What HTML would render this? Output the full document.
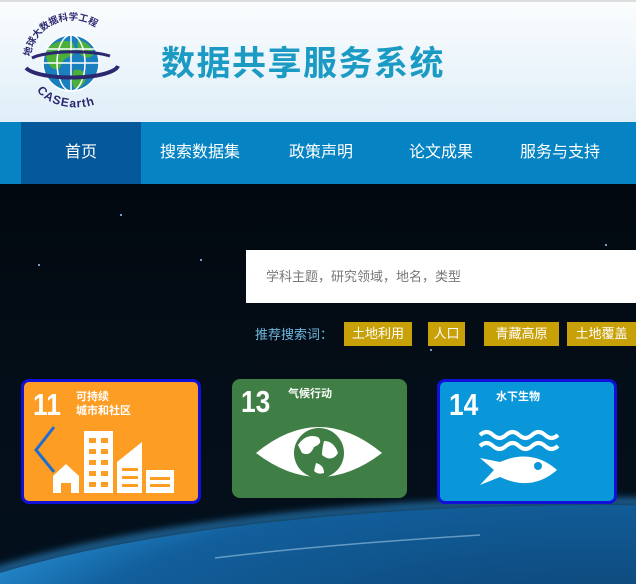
<!DOCTYPE html>
<html><head><meta charset="utf-8"><style>
*{margin:0;padding:0;box-sizing:border-box}
html,body{width:636px;height:584px;overflow:hidden}
body{font-family:"Liberation Sans","Noto Sans CJK SC",sans-serif;background:#000;position:relative}
.hdr{position:absolute;left:0;top:0;width:636px;height:122px;background:linear-gradient(#fbfdfe,#dfeef8);border-top:2px solid #ddd}
.title{position:absolute;left:161px;top:36px;font-size:34px;font-weight:bold;color:#1b9bc4;letter-spacing:1.5px}
.nav{position:absolute;left:0;top:122px;width:636px;height:62px;background:#0583c2}
.nav div{position:absolute;top:0;height:62px;line-height:62px;color:#fff;font-size:16px;text-align:center;width:120px}
.nav .act{background:#05599a}
.sky{position:absolute;left:0;top:184px;width:636px;height:400px;background:linear-gradient(#02080f,#040e18 50%,#03101c)}
.search{position:absolute;left:246px;top:250px;width:390px;height:53px;background:#fff;color:#777;font-size:13px;line-height:53px;padding-left:20px}
.lbl{position:absolute;left:255px;top:324px;color:#6fb8e0;font-size:13px}
.tag{position:absolute;top:322px;height:24px;line-height:24px;background:#c8a008;color:#fff;font-size:13px;text-align:center}
.card{position:absolute;top:379px;color:#fff;overflow:hidden}
.num{position:absolute;font-size:31px;font-weight:bold;font-family:"Liberation Sans Narrow","Liberation Sans",sans-serif;transform:scaleX(.85);transform-origin:left}
.cap{position:absolute;font-size:11px;font-weight:bold;line-height:14px}
.star{position:absolute;width:2px;height:2px;background:#9cf;border-radius:50%}
</style></head><body>
<div class="hdr"></div>
<svg style="position:absolute;left:0;top:0" width="140" height="122" viewBox="0 0 140 122">
<defs>
<path id="ta" d="M30 62 A42 42 0 0 1 114 62"/>
<path id="tb" d="M34 82 A40 26 0 0 0 118 78"/>
<clipPath id="gc"><circle cx="71" cy="63" r="28"/></clipPath>
</defs>
<circle cx="71" cy="63" r="28" fill="#1a7fbf"/>
<g clip-path="url(#gc)" fill="#4caf3a">
<path d="M48 48 q10-10 24-6 q6 8 0 14 q-10 2-12 12 q-8 4-12-6 q-4-6 0-14z"/>
<path d="M78 40 q12 2 16 14 q-4 6-12 2 q-6-6-4-16z"/>
<path d="M74 70 q10-2 12 8 q-2 10-12 10 q-4-8 0-18z"/>
</g>
<g stroke="#fff" stroke-width="1.5" fill="none">
<circle cx="71" cy="63" r="28"/><ellipse cx="71" cy="63" rx="14" ry="28"/><line x1="71" y1="35" x2="71" y2="91"/>
<line x1="43" y1="63" x2="99" y2="63"/><line x1="47" y1="49" x2="95" y2="49"/><line x1="47" y1="77" x2="95" y2="77"/></g>
<path d="M26 68 A47 13 0 0 0 118 66" fill="none" stroke="#2b2870" stroke-width="4"/>
<path d="M32 58 A45 10 0 0 1 110 56" fill="none" stroke="#2b2870" stroke-width="3"/>
<text font-size="9.5" font-weight="bold" fill="#2b2870" font-family="Noto Sans CJK SC,sans-serif"><textPath href="#ta" startOffset="4%">地球大数据科学工程</textPath></text>
<text font-size="12" font-weight="bold" fill="#2b2870" letter-spacing="1"><textPath href="#tb" startOffset="8%">CASEarth</textPath></text>
</svg>
<div class="title">数据共享服务系统</div>
<div class="nav">
<div class="act" style="left:21px">首页</div>
<div style="left:140px">搜索数据集</div>
<div style="left:261px">政策声明</div>
<div style="left:381px">论文成果</div>
<div style="left:500px">服务与支持</div>
</div>
<div class="sky">
<div class="star" style="left:38px;top:80px"></div><div class="star" style="left:200px;top:75px"></div><div class="star" style="left:605px;top:60px"></div><div class="star" style="left:430px;top:165px"></div><div class="star" style="left:560px;top:110px"></div><div class="star" style="left:120px;top:30px"></div>
</div>
<svg style="position:absolute;left:0;top:0" width="636" height="584">
<defs>
<radialGradient id="eg" cx="600" cy="675" r="750" gradientUnits="userSpaceOnUse" gradientTransform="translate(0 450) scale(1 .3333)">
<stop offset="0" stop-color="#0a3a66"/><stop offset=".75" stop-color="#125f9c"/><stop offset=".95" stop-color="#2790d4"/><stop offset="1" stop-color="#6cc8f6"/>
</radialGradient>
<filter id="bl"><feGaussianBlur stdDeviation="4"/></filter>
</defs>
<ellipse cx="600" cy="675" rx="753" ry="173" fill="none" stroke="#2a86c8" stroke-width="8" filter="url(#bl)" opacity=".8"/>
<ellipse cx="600" cy="675" rx="750" ry="170" fill="url(#eg)"/>
<path d="M215 558 Q320 545 480 535" stroke="#b8def4" stroke-width="1.5" fill="none" opacity=".5"/>
</svg>
<div class="search">学科主题，研究领域，地名，类型</div>
<div class="lbl">推荐搜索词：</div>
<div class="tag" style="left:344px;width:68px">土地利用</div>
<div class="tag" style="left:428px;width:37px">人口</div>
<div class="tag" style="left:484px;width:75px">青藏高原</div>
<div class="tag" style="left:567px;width:69px">土地覆盖</div>

<div class="card" style="left:21px;width:180px;height:125px;background:#fd9d24;border:3px solid #1010d8;border-radius:8px">
<div class="num" style="left:9px;top:5px">11</div>
<div class="cap" style="left:52px;top:8px">可持续<br>城市和社区</div>
<svg style="position:absolute;left:0;top:0" width="174" height="119">
<path d="M30 45 L12 68 L30 90" stroke="#1c6fd0" stroke-width="3" fill="none"/>
<path d="M29 111 V94 L42 82 L55 94 V111 H47 V101 H37 V111Z" fill="#fff"/>
<rect x="60" y="49" width="29" height="62" fill="#fff"/>
<path d="M93 111 V80 L118 60 V111Z" fill="#fff"/>
<rect x="122" y="88" width="28" height="23" fill="#fff"/>
<g fill="#fd9d24"><rect x="65" y="56" width="7" height="5"/><rect x="77" y="56" width="7" height="5"/><rect x="65" y="67" width="7" height="5"/><rect x="77" y="67" width="7" height="5"/><rect x="65" y="78" width="7" height="5"/><rect x="77" y="78" width="7" height="5"/><rect x="65" y="89" width="7" height="5"/><rect x="77" y="89" width="7" height="5"/><rect x="65" y="100" width="7" height="5"/><rect x="77" y="100" width="7" height="5"/>
<rect x="98" y="86" width="16" height="3"/><rect x="98" y="94" width="16" height="3"/><rect x="98" y="102" width="16" height="3"/><rect x="126" y="95" width="20" height="3"/><rect x="126" y="102" width="20" height="3"/></g>
</svg></div>

<div class="card" style="left:232px;width:175px;height:119px;background:#3f7e44;border-radius:8px">
<div class="num" style="left:9px;top:5px">13</div>
<div class="cap" style="left:56px;top:8px">气候行动</div>
<svg style="position:absolute;left:0;top:0" width="175" height="119">
<path d="M24 74 Q87 22 150 74 Q87 122 24 74Z" fill="#fff"/>
<circle cx="87" cy="74" r="25" fill="#3f7e44"/>
<path d="M66 66 q8-12 20-8 q6 6-4 10 q-4 10-12 6z M92 62 q10 0 14 12 q-6 10-16 2 q0-6 2-14z M84 84 q8 2 8 10 q-6 2-10-2z" fill="#fff"/>
</svg></div>

<div class="card" style="left:437px;width:180px;height:125px;background:#0a97d9;border:3px solid #1010d8;border-radius:8px">
<div class="num" style="left:9px;top:5px">14</div>
<div class="cap" style="left:56px;top:8px">水下生物</div>
<svg style="position:absolute;left:0;top:0" width="174" height="119">
<g stroke="#fff" stroke-width="4" fill="none"><path d="M40 53 q6.5-6 13 0 t13 0 t13 0 t13 0 t13 0 t13 0"/><path d="M40 64 q6.5-6 13 0 t13 0 t13 0 t13 0 t13 0 t13 0"/></g>
<path d="M40 76 L54 88 L40 103 L60 95 Q92 110 117 88 Q92 66 60 80Z" fill="#fff"/>
<circle cx="98" cy="84" r="4" fill="#0a97d9"/>
</svg></div>
</body></html>
